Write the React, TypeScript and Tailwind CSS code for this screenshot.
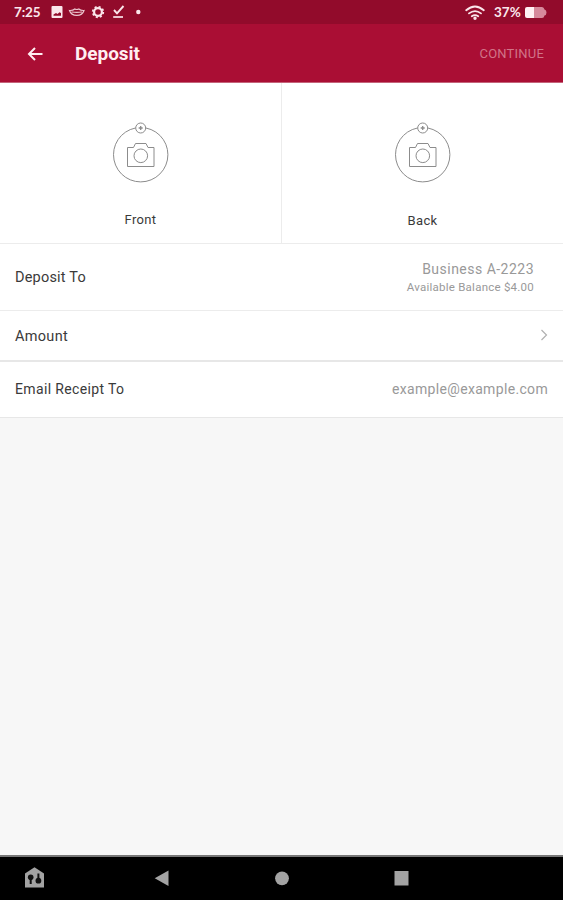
import React from "react";

function CheckCapture({ label, lowerLabel }: { label: string; lowerLabel?: boolean }) {
  return (
    <button className="flex h-full flex-1 flex-col items-center pt-[39px]">
      <svg width="58" height="62" viewBox="0 0 58 62" fill="none" stroke="#8c8c8c" strokeWidth="1">
        <circle cx="28.700" cy="32.700" r="27.200" />
        <circle cx="28.700" cy="6" r="5" fill="#fff" />
        <path d="M28.700 4v4M26.700 6h4" strokeWidth="1.300" />
        <path d="M15.500 25.500h6l2-4h10.500l2 4h6v19h-26.500z" />
        <circle cx="28.800" cy="33.800" r="6.800" />
      </svg>
      <span className={"text-[13px] leading-4 tracking-[0.350px] text-[#3a3a3a] " + (lowerLabel ? "mt-[28.500px]" : "mt-[28px]")}>
        {label}
      </span>
    </button>
  );
}

function StatusBar() {
  return (
    <div className="flex h-6 items-center bg-[#920b2b] pl-[14px] pr-[16px] font-['Lato',sans-serif] text-[#fbe6eb]">
      <span className="w-[37px] text-[13.5px] font-bold leading-6 tracking-[-0.100px]">7:25</span>
      <svg width="92" height="24" viewBox="51 0 92 24" fill="none" stroke="currentColor">
        <path fillRule="evenodd" fill="currentColor" stroke="none" d="M52.500 6h9a1 1 0 0 1 1 1v10a1 1 0 0 1-1 1h-9a1 1 0 0 1-1-1V7a1 1 0 0 1 1-1zM53.500 15.700h7.500V13l-1.500-.8-2 1.800-1.500-1-2.500 1.500z" />
        <path d="M69.500 10.500q3.500.2 5.300-1.500 2 1 4 0 1.800 1.700 5.200 1.500-1.500 4.800-7.200 4.900-5.800-.1-7.300-4.900zM71.500 12q5.300.8 10.600 0" strokeWidth="1.200" opacity=".85" />
        <circle cx="98" cy="12" r="3.900" strokeWidth="2.200" />
        <circle cx="98" cy="12" r="5.300" strokeWidth="1.700" strokeDasharray="2.080 2.080" />
        <path d="m114 10 3 3.300 6.500-7.300" strokeWidth="1.900" />
        <path d="M113.200 17h9.800" strokeWidth="1.700" />
        <circle cx="138.300" cy="12" r="2.200" fill="currentColor" stroke="none" />
      </svg>
      <div className="ml-auto flex items-center">
        <svg width="20" height="15" viewBox="0 0 20 15" fill="none" stroke="currentColor" strokeWidth="1.800" strokeLinecap="round">
          <path d="M1.200 5.200q8.800-7.500 17.600 0M4 8.400q6-4.600 12 0M6.800 11.200q3.200-2.200 6.400 0" />
          <circle cx="10" cy="13.200" r=".8" fill="currentColor" />
        </svg>
        <span className="ml-[9px] w-[31px] whitespace-nowrap text-[13.500px] font-bold leading-6">37%</span>
        <svg width="22" height="11" viewBox="0 0 22 11">
          <path d="M9 0h8q2 0 2.500 2.500 2 .5 2 3t-2 3Q19 11 17 11H9z" fill="#d6899b" />
          <path d="M2 0h7v11H2Q0 11 0 9V2Q0 0 2 0z" fill="#fff1f3" />
        </svg>
      </div>
    </div>
  );
}

function NavigationBar() {
  return (
    <nav className="h-[45px] border-t-2 border-[#777] bg-black">
      <svg width="563" height="43" viewBox="0 857 563 43" fill="#a3a3a3">
        <path d="m34.500 867.200 9.500 6.300v14H25v-14z" />
        <g fill="#111" stroke="#111">
          <circle cx="30.700" cy="877.200" r="2.800" stroke="none" />
          <path d="M30.700 878v6M38.400 873.500v6" strokeWidth="2" />
          <circle cx="38.400" cy="880.700" r="2.900" stroke="none" />
        </g>
        <path d="M154.700 878.300 168.500 870.500v15.600z" />
        <circle cx="282" cy="878.300" r="6.900" />
        <path d="M394.500 871h14v14.500h-14z" />
      </svg>
    </nav>
  );
}

export default function App() {
  return (
    <div className="flex h-[900px] w-[563px] flex-col overflow-hidden bg-[#f7f7f7] font-['Roboto',sans-serif] text-[#3a3a3a]">
      <StatusBar />
      <header className="flex h-[59px] items-center border-b border-[#c4647a] bg-[#aa0e34] pl-[27px] pr-[19px] pt-px">
        <svg width="16" height="14" viewBox="0 0 16 14" fill="none" stroke="#ffeef1" strokeWidth="2">
          <path d="M15.500 7H2M8 1 2 7l6 6" />
        </svg>
        <h1 className="ml-[32px] text-[19px] font-bold leading-6 tracking-[-0.050px] text-[#ffeef1]">Deposit</h1>
        <button className="ml-auto text-[13px] leading-5 tracking-[0.200px] text-[#d17488]">CONTINUE</button>
      </header>
      <main className="flex-1">
        <section className="flex h-[161px] divide-x divide-[#ececec] border-b border-[#ececec] bg-white">
          <CheckCapture label="Front" />
          <CheckCapture label="Back" lowerLabel />
        </section>
        <section className="flex h-[67px] items-center justify-between border-b border-[#ececec] bg-white pl-[15px] pr-[29px]">
          <span className="pt-[2px] text-[14.500px] tracking-[0.200px]">Deposit To</span>
          <div className="flex flex-col items-end pt-[2px] text-[#999]">
            <span className="text-sm leading-[18px] tracking-[0.480px]">Business A-2223</span>
            <span className="text-[11.500px] leading-[18px] tracking-[0.240px]">Available Balance $4.00</span>
          </div>
        </section>
        <section className="flex h-[51px] items-center justify-between border-b-2 border-[#e7e7e7] bg-white pl-[15px] pr-[15px]">
          <span className="pt-[3px] text-[14.500px] tracking-[0.300px]">Amount</span>
          <svg className="mb-px" width="8" height="12" viewBox="0 0 8 12" fill="none" stroke="#b0b0b0" strokeWidth="1.200">
            <path d="m1.500 1 5 5-5 5" />
          </svg>
        </section>
        <section className="flex h-[56px] items-center justify-between border-b border-[#e7e7e7] bg-white px-[15px] pb-px">
          <span className="text-sm tracking-[0.350px]">Email Receipt To</span>
          <span className="text-sm tracking-[0.330px] text-[#999]">example@example.com</span>
        </section>
      </main>
      <NavigationBar />
    </div>
  );
}
